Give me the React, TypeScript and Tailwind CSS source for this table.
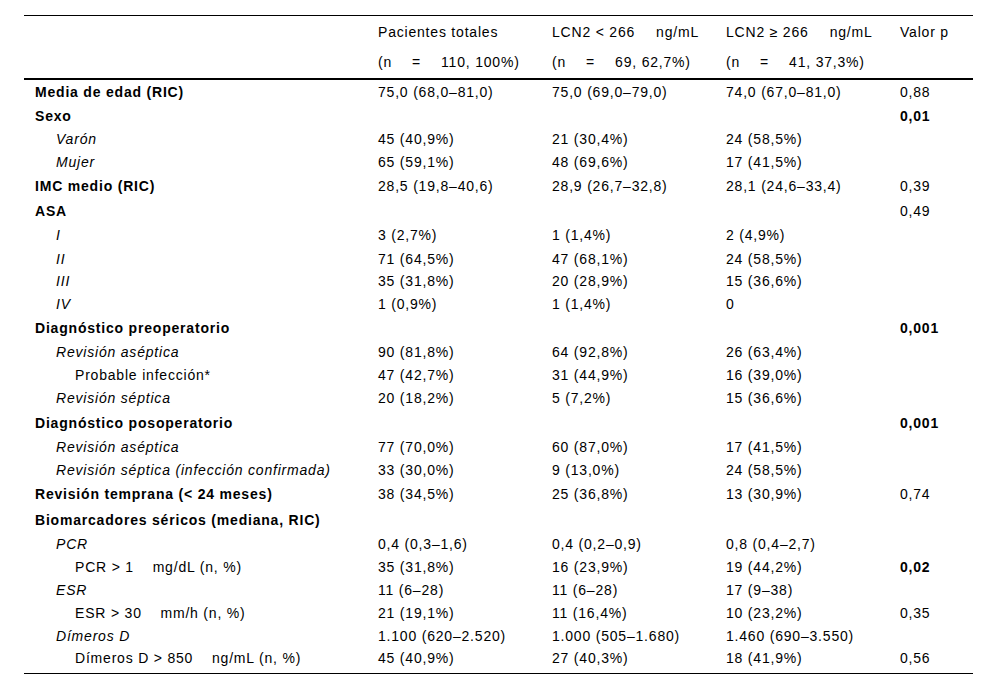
import React from 'react';

type Row = {
  label: string;
  level: 0 | 1 | 2;
  kind: 'bold' | 'italic' | 'plain';
  cells: string[];
  p?: string;
  pBold?: boolean;
  h: string;
};

const gap = '\u00a0\u00a0\u00a0\u00a0';

const rows: Row[] = [
  { label: 'Media de edad (RIC)', level: 0, kind: 'bold', cells: ['75,0 (68,0–81,0)', '75,0 (69,0–79,0)', '74,0 (67,0–81,0)'], p: '0,88', h: 'h-[24px]' },
  { label: 'Sexo', level: 0, kind: 'bold', cells: ['', '', ''], p: '0,01', pBold: true, h: 'h-[24px]' },
  { label: 'Varón', level: 1, kind: 'italic', cells: ['45 (40,9%)', '21 (30,4%)', '24 (58,5%)'], h: 'h-[22px]' },
  { label: 'Mujer', level: 1, kind: 'italic', cells: ['65 (59,1%)', '48 (69,6%)', '17 (41,5%)'], h: 'h-[23px]' },
  { label: 'IMC medio (RIC)', level: 0, kind: 'bold', cells: ['28,5 (19,8–40,6)', '28,9 (26,7–32,8)', '28,1 (24,6–33,4)'], p: '0,39', h: 'h-[25px]' },
  { label: 'ASA', level: 0, kind: 'bold', cells: ['', '', ''], p: '0,49', h: 'h-[25px]' },
  { label: 'I', level: 1, kind: 'italic', cells: ['3 (2,7%)', '1 (1,4%)', '2 (4,9%)'], h: 'h-[24px]' },
  { label: 'II', level: 1, kind: 'italic', cells: ['71 (64,5%)', '47 (68,1%)', '24 (58,5%)'], h: 'h-[23px]' },
  { label: 'III', level: 1, kind: 'italic', cells: ['35 (31,8%)', '20 (28,9%)', '15 (36,6%)'], h: 'h-[22px]' },
  { label: 'IV', level: 1, kind: 'italic', cells: ['1 (0,9%)', '1 (1,4%)', '0'], h: 'h-[24px]' },
  { label: 'Diagnóstico preoperatorio', level: 0, kind: 'bold', cells: ['', '', ''], p: '0,001', pBold: true, h: 'h-[24px]' },
  { label: 'Revisión aséptica', level: 1, kind: 'italic', cells: ['90 (81,8%)', '64 (92,8%)', '26 (63,4%)'], h: 'h-[24px]' },
  { label: 'Probable infección*', level: 2, kind: 'plain', cells: ['47 (42,7%)', '31 (44,9%)', '16 (39,0%)'], h: 'h-[22px]' },
  { label: 'Revisión séptica', level: 1, kind: 'italic', cells: ['20 (18,2%)', '5 (7,2%)', '15 (36,6%)'], h: 'h-[24px]' },
  { label: 'Diagnóstico posoperatorio', level: 0, kind: 'bold', cells: ['', '', ''], p: '0,001', pBold: true, h: 'h-[25px]' },
  { label: 'Revisión aséptica', level: 1, kind: 'italic', cells: ['77 (70,0%)', '60 (87,0%)', '17 (41,5%)'], h: 'h-[23px]' },
  { label: 'Revisión séptica (infección confirmada)', level: 1, kind: 'italic', cells: ['33 (30,0%)', '9 (13,0%)', '24 (58,5%)'], h: 'h-[23px]' },
  { label: 'Revisión temprana (< 24 meses)', level: 0, kind: 'bold', cells: ['38 (34,5%)', '25 (36,8%)', '13 (30,9%)'], p: '0,74', h: 'h-[26px]' },
  { label: 'Biomarcadores séricos (mediana, RIC)', level: 0, kind: 'bold', cells: ['', '', ''], h: 'h-[25px]' },
  { label: 'PCR', level: 1, kind: 'italic', cells: ['0,4 (0,3–1,6)', '0,4 (0,2–0,9)', '0,8 (0,4–2,7)'], h: 'h-[23px]' },
  { label: `PCR > 1${gap}mg/dL (n, %)`, level: 2, kind: 'plain', cells: ['35 (31,8%)', '16 (23,9%)', '19 (44,2%)'], p: '0,02', pBold: true, h: 'h-[23px]' },
  { label: 'ESR', level: 1, kind: 'italic', cells: ['11 (6–28)', '11 (6–28)', '17 (9–38)'], h: 'h-[23px]' },
  { label: `ESR > 30${gap}mm/h (n, %)`, level: 2, kind: 'plain', cells: ['21 (19,1%)', '11 (16,4%)', '10 (23,2%)'], p: '0,35', h: 'h-[23px]' },
  { label: 'Dímeros D', level: 1, kind: 'italic', cells: ['1.100 (620–2.520)', '1.000 (505–1.680)', '1.460 (690–3.550)'], h: 'h-[23px]' },
  { label: `Dímeros D > 850${gap}ng/mL (n, %)`, level: 2, kind: 'plain', cells: ['45 (40,9%)', '27 (40,3%)', '18 (41,9%)'], p: '0,56', h: 'h-[26px] pb-[4px]' },
];

const cols = 'grid grid-cols-[343px_174px_174px_174px_84px] items-center';
const indent = ['pl-[11px]', 'pl-[32px]', 'pl-[51px]'];
const labelStyle = { bold: 'font-bold', italic: 'italic', plain: '' };

// "(n = 110, 100%)" with the wide gaps of the printed table
const N = ({ n, rest }: { n: string; rest: string }) => (
  <span>
    (n<span className="inline-block w-[20px]" />=<span className="inline-block w-[20px]" />
    {n}, {rest})
  </span>
);

export default function App() {
  return (
    <div className="w-[1000px] h-[690px] bg-white pt-[15px] pl-[24px] text-[14px] leading-[18px] tracking-[0.8px] text-black font-['Liberation_Sans',Arial,sans-serif] whitespace-nowrap">
      <div className="w-[949px] border-t border-b border-black">
        <div className={`${cols} h-[31px]`}>
          <div />
          <div className="pl-[11px]">Pacientes totales</div>
          <div className="pl-[11px]">
            LCN2 &lt; 266<span className="inline-block w-[21px]" />ng/mL
          </div>
          <div className="pl-[11px]">
            LCN2 ≥ 266<span className="inline-block w-[21px]" />ng/mL
          </div>
          <div className="pl-[11px]">Valor p</div>
        </div>
        <div className={`${cols} h-[33px] pb-[2px] border-b-2 border-black`}>
          <div />
          <div className="pl-[11px]"><N n="110" rest="100%" /></div>
          <div className="pl-[11px]"><N n="69" rest="62,7%" /></div>
          <div className="pl-[11px]"><N n="41" rest="37,3%" /></div>
          <div />
        </div>
        {rows.map((r, i) => (
          <div key={i} className={`${cols} ${r.h}`}>
            <div className={`${indent[r.level]} ${labelStyle[r.kind]}`}>{r.label}</div>
            {r.cells.map((c, j) => (
              <div key={j} className="pl-[11px]">{c}</div>
            ))}
            <div className={`pl-[11px] ${r.pBold ? 'font-bold' : ''}`}>{r.p ?? ''}</div>
          </div>
        ))}
      </div>
    </div>
  );
}
